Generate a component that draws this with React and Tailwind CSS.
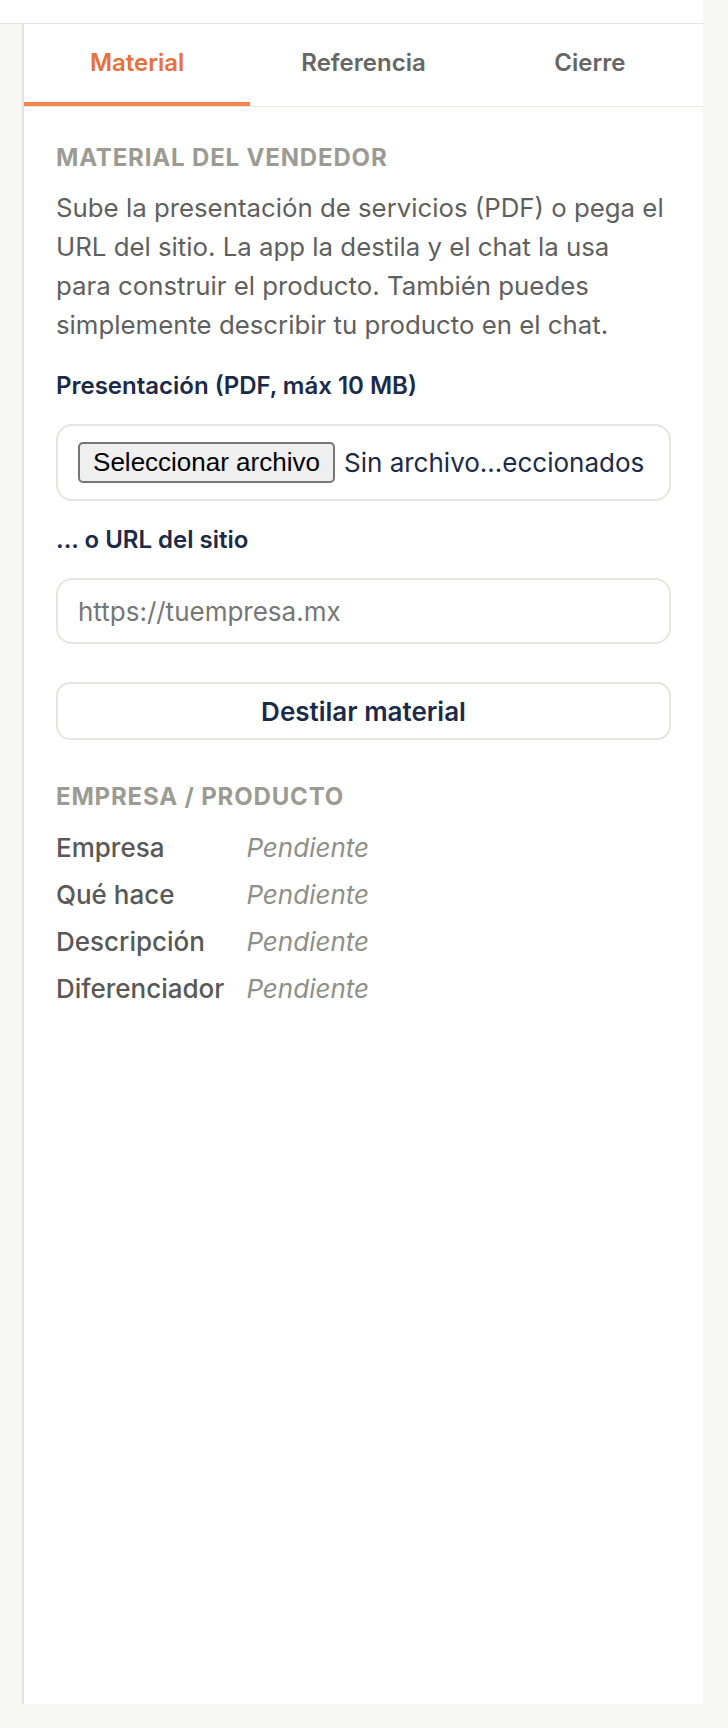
import React from "react";

const rows = ["Empresa", "Qué hace", "Descripción", "Diferenciador"];

export default function App() {
  return (
    <div className="w-[728px] h-[1728px] bg-[#f7f7f5] font-['Inter',sans-serif] overflow-hidden">
      <div className="w-[703px] h-[1704px] flex flex-col">
        <div className="h-[24px] bg-white border-b-[1.5px] border-[#e6e5e0] shrink-0" />
        <div className="flex flex-1 min-h-0">
          <div className="w-[22px] shrink-0" />
          <aside className="flex-1 bg-white border-l-2 border-[#e6e5e0] flex flex-col">
            <nav className="grid grid-cols-3 border-b-[1.5px] border-[#e6e5e0]">
              <div className="h-[82px] flex items-center justify-center border-b-4 border-[#f7844f] text-[24px] font-semibold text-[#e8703a]">
                Material
              </div>
              <div className="h-[82px] flex items-center justify-center border-b-4 border-transparent text-[24px] font-semibold text-[#666666]">
                Referencia
              </div>
              <div className="h-[82px] flex items-center justify-center border-b-4 border-transparent text-[24px] font-semibold text-[#666666]">
                Cierre
              </div>
            </nav>
            <div className="px-[32px] pt-[33px] flex flex-col">
              <h2 className="text-[24px] leading-[36px] font-bold uppercase tracking-[0.035em] text-[#9b9b93]">
                Material del vendedor
              </h2>
              <p className="mt-[12px] text-[25.8px] leading-[39px] text-[#5f5f5f]">
                Sube la presentación de servicios (PDF) o pega el URL del sitio. La app la destila y el chat la usa para construir el producto. También puedes simplemente describir tu producto en el chat.
              </p>
              <label className="mt-[25px] text-[24px] leading-[33px] font-semibold text-[#1b2a4a]">
                Presentación (PDF, máx 10 MB)
              </label>
              <div className="mt-[22px] h-[77px] border-2 border-[#e6e5e0] rounded-[16px] flex items-center pl-[20px] pr-[16px] gap-[9px] overflow-hidden">
                <span className="h-[41px] w-[257px] shrink-0 flex items-center justify-center bg-[#efefef] border-2 border-[#767676] rounded-[5px] font-['Liberation_Sans',sans-serif] text-[26px] text-black">
                  Seleccionar archivo
                </span>
                <span className="text-[26px] text-[#1b2a4a] whitespace-nowrap">Sin archivo...eccionados</span>
              </div>
              <label className="mt-[22px] text-[24px] leading-[33px] font-semibold text-[#1b2a4a]">
                ... o URL del sitio
              </label>
              <div className="mt-[22px] h-[66px] border-2 border-[#e6e5e0] rounded-[16px] flex items-center px-[20px]">
                <span className="text-[26px] text-[#767676]">https://tuempresa.mx</span>
              </div>
              <div className="mt-[38px] h-[58px] border-2 border-[#e6e5e0] rounded-[14px] flex items-center justify-center text-[26px] font-semibold text-[#1b2a4a]">
                Destilar material
              </div>
              <h2 className="mt-[39px] text-[24px] leading-[36px] font-bold uppercase tracking-[0.035em] text-[#9b9b93]">
                Empresa / Producto
              </h2>
              <div className="mt-[15px] grid grid-cols-[auto_1fr] gap-x-[22px] gap-y-[11px] text-[26px] leading-[36px]">
                {rows.map((r) => (
                  <React.Fragment key={r}>
                    <span className="font-medium text-[#585858]">{r}</span>
                    <span className="italic text-[#8f8f8a]">Pendiente</span>
                  </React.Fragment>
                ))}
              </div>
            </div>
          </aside>
        </div>
      </div>
    </div>
  );
}
